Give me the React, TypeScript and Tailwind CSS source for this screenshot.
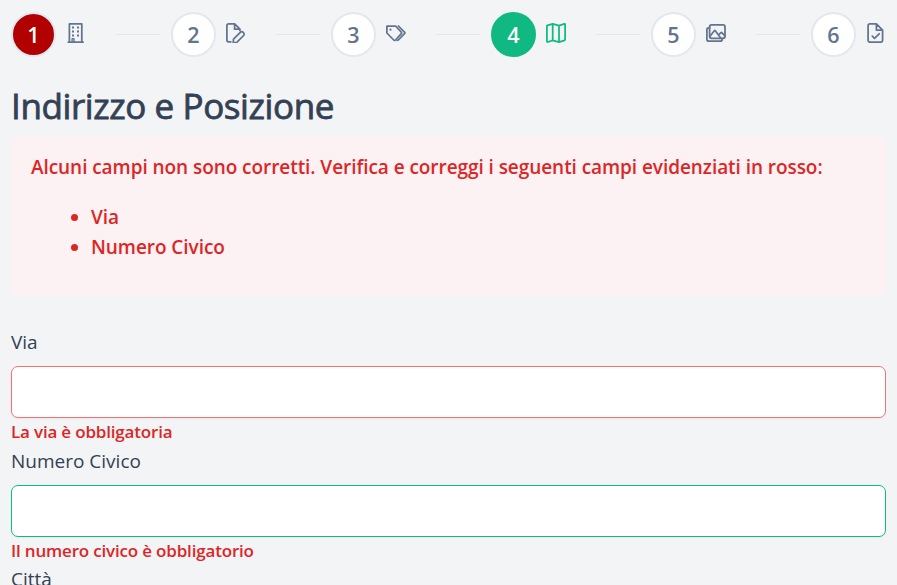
import type { ReactNode } from "react";

const icon = (children: ReactNode) => (
  <svg className="size-5 shrink-0" viewBox="0 0 20 20" fill="none" stroke="currentColor" strokeWidth="1.75" strokeLinejoin="round" strokeLinecap="round">
    {children}
  </svg>
);

const BuildingIcon = () =>
  icon(
    <>
      <path d="M3.4 19V.9h12.4V19M2.3 19.2h14.8" />
      <path d="M6 4.4h2M11 4.4h2M6 8.4h2M11 8.4h2M6 12.4h2M11 12.4h2" strokeWidth="2" strokeLinecap="butt" />
      <path d="M6.1 19v-3.3H8V19" strokeWidth="1.3" />
    </>
  );

const FileEditIcon = () =>
  icon(
    <>
      <path d="M4.9 18.8H2.6A1.7 1.7 0 0 1 .9 17.1V2.6A1.7 1.7 0 0 1 2.6.9h6.1l5.2 5.2v1.5M8.6 1v5.2h5.2" />
      <path d="m7.5 16.2 6.8-6.8a1.9 1.9 0 0 1 2.8-.1l.5.5a1.9 1.9 0 0 1 0 2.7l-6.8 6.8-3.6.2Z" />
    </>
  );

const TagsIcon = () =>
  icon(
    <>
      <path d="M.9 3h8.7l5.7 6.1q.8.8 0 1.6L9.5 17q-.9.9-1.8 0L.9 10Z" />
      <path d="m12.4 3 6.1 6.1q.8.8 0 1.6l-6.1 6.2q-.6.6-1.2.5" />
      <circle cx="4.5" cy="6.7" r="1.1" fill="currentColor" stroke="none" />
    </>
  );

const MapIcon = () =>
  icon(
    <path d="M.9 3q0-.5.5-.7L6.7.9 13 2.6 18.4.9q.7-.2.7.6v15q0 .7-.6.9L13 19.1l-6.3-1.7-4.9 1.6q-.9.2-.9-.7ZM6.7 1v16.4M13 2.6v16.5" />
  );

const ImagesIcon = () =>
  icon(
    <>
      <rect x="3.6" y="1.9" width="15.4" height="13.4" rx="2" />
      <path d="M3.6 4.8H2.8A1.9 1.9 0 0 0 .9 6.7v9.5a2 2 0 0 0 2 2h11.4a2 2 0 0 0 1.9-2v-.8M4 13.2l4.3-5.5q.5-.6 1 0l5 6.8M12.5 12l2.2-2.2q.7-.6 1.3 0l3 3.1" />
    </>
  );

const FileCheckIcon = () =>
  icon(
    <>
      <path d="M4 .9h6.4l6.2 6.2v10.2a1.9 1.9 0 0 1-1.9 1.9H4a1.9 1.9 0 0 1-1.9-1.9V2.8A1.9 1.9 0 0 1 4 .9ZM10.4 1v6.1h6.1" />
      <path d="m6.3 13.2 2.2 2.2 4.7-4.6" />
    </>
  );

const steps = [
  { n: 1, Icon: BuildingIcon, circle: "border-slate-200 bg-[#b00000] text-white", color: "text-slate-500" },
  { n: 2, Icon: FileEditIcon, circle: "border-slate-200 bg-white text-slate-500", color: "text-slate-500" },
  { n: 3, Icon: TagsIcon, circle: "border-slate-200 bg-white text-slate-500", color: "text-slate-500" },
  { n: 4, Icon: MapIcon, circle: "border-[#10b981] bg-[#10b981] text-white", color: "text-[#10b981]" },
  { n: 5, Icon: ImagesIcon, circle: "border-slate-200 bg-white text-slate-500", color: "text-slate-500" },
  { n: 6, Icon: FileCheckIcon, circle: "border-slate-200 bg-white text-slate-500", color: "text-slate-500" },
];

function Stepper() {
  return (
    <nav className="flex h-[45px] shrink-0 items-center">
      {steps.map(({ n, Icon, circle, color }, i) => (
        <div key={n} className="flex items-center">
          <span className={`flex size-[45px] items-center justify-center rounded-full border-2 pt-px text-[21.5px] leading-none font-semibold ${circle}`}>
            {n}
          </span>
          <span className={`mb-[3px] ml-2.5 ${color}`}>
            <Icon />
          </span>
          {i < steps.length - 1 && <span className="mr-2.5 ml-[30px] h-px w-[45px] bg-slate-200" />}
        </div>
      ))}
    </nav>
  );
}

function Field({ label, border, error }: { label: string; border: string; error: string }) {
  return (
    <div className="flex h-[119px] shrink-0 flex-col">
      <label className="mb-[9px] text-[19px] leading-[30px]">{label}</label>
      <input className={`h-[52px] w-full shrink-0 rounded-[7px] border bg-white px-3 shadow-[0_1px_2px_rgba(18,18,23,0.05)] outline-none ${border}`} />
      <small className="mt-px text-[17px] leading-[26px] font-semibold tracking-[-0.18px] text-[#dc2626]">{error}</small>
    </div>
  );
}

export default function App() {
  return (
    <main className="flex h-[585px] w-[897px] flex-col bg-[#f3f4f6] px-[11px] pt-3 font-['Open_Sans','Noto_Sans',sans-serif] text-[#334155]">
      <Stepper />
      <h1 className="mt-6 h-[55px] shrink-0 text-[35px] leading-[50px] font-normal tracking-[-0.4px] whitespace-nowrap [-webkit-text-stroke:0.8px_#334155]">Indirizzo e Posizione</h1>
      <section className="h-40 shrink-0 rounded-[7px] bg-[#fcf1f3] px-5 pt-4 text-[19px] leading-[30px] font-semibold tracking-[-0.06px] whitespace-nowrap text-[#dc2626]">
        <p>Alcuni campi non sono corretti. Verifica e correggi i seguenti campi evidenziati in rosso:</p>
        <ul className="mt-5 list-disc pl-[60px]">
          <li>Via</li>
          <li>Numero Civico</li>
        </ul>
      </section>
      <form className="mt-[31px] flex h-[258px] shrink-0 flex-col">
        <Field label="Via" border="border-[#f87171]" error="La via è obbligatoria" />
        <Field label="Numero Civico" border="border-[#10b981]" error="Il numero civico è obbligatorio" />
        <div className="-mt-px h-[21px] overflow-hidden">
          <label className="block text-[19px] leading-[30px]">Città</label>
        </div>
      </form>
    </main>
  );
}
